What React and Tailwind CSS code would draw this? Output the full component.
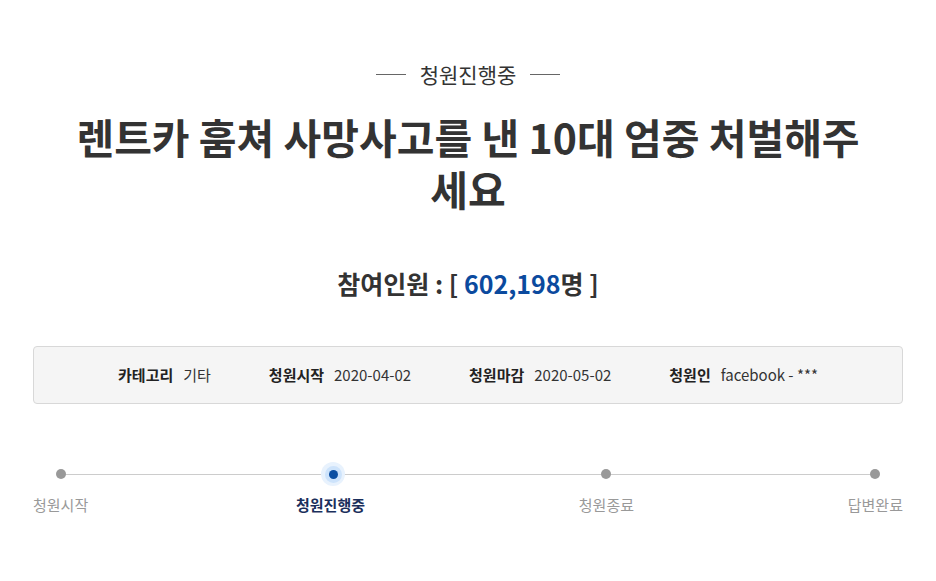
import React from "react"

const steps = [
  { label: "청원시작", active: false },
  { label: "청원진행중", active: true },
  { label: "청원종료", active: false },
  { label: "답변완료", active: false },
]

const info = [
  { label: "카테고리", value: "기타" },
  { label: "청원시작", value: "2020-04-02" },
  { label: "청원마감", value: "2020-05-02" },
  { label: "청원인", value: "facebook - ***" },
]

export default function App() {
  return (
    <div
      className="min-h-screen bg-white text-[#333] px-[33px]"
      style={{ fontFamily: '"Noto Sans CJK KR", "Noto Sans", sans-serif' }}
    >
      <div className="pt-[60px] flex items-center justify-center gap-[14px] text-[21px] leading-[28px] text-[#333]">
        <span className="w-[30px] h-px bg-[#666]" />
        <span>청원진행중</span>
        <span className="w-[30px] h-px bg-[#666]" />
      </div>

      <h1 className="mt-[22px] mx-auto max-w-[800px] text-center text-[41px] leading-[52px] font-bold text-[#333]">
        렌트카 훔쳐 사망사고를 낸 10대 엄중 처벌해주세요
      </h1>

      <p className="mt-[51px] text-center text-[25px] leading-[36px] font-bold text-[#333]">
        참여인원 : [ <span className="text-[#0b4a9e]">602,198</span>명 ]
      </p>

      <div className="mt-[45px] h-[58px] rounded-[4px] border border-[#d8d8d8] bg-[#f5f5f5] flex items-center justify-center gap-[58px] text-[15px]">
        {info.map((item) => (
          <div key={item.label} className="flex items-center gap-[10px]">
            <span className="font-bold text-[#222]">{item.label}</span>
            <span className="text-[#333]">{item.value}</span>
          </div>
        ))}
      </div>

      <div className="mt-[59px] flex justify-between">
        {steps.map((step) => (
          <div key={step.label} className="relative flex flex-col items-center">
            <div className="h-[22px] flex items-center justify-center">
              {step.active ? (
                <span className="relative z-10 w-[24px] h-[24px] rounded-full bg-[#e8f2fd] flex items-center justify-center">
                  <span className="w-[17px] h-[17px] rounded-full bg-[#cde3fb] flex items-center justify-center">
                    <span className="w-[9px] h-[9px] rounded-full bg-[#0b4ea2]" />
                  </span>
                </span>
              ) : (
                <span className="relative z-10 w-[10px] h-[10px] rounded-full bg-[#999]" />
              )}
            </div>
            <span
              className={
                step.active
                  ? "mt-[9px] -ml-[6px] text-[15px] leading-[22px] font-bold text-[#1b2f5c]"
                  : "mt-[9px] text-[15px] leading-[22px] text-[#999]"
              }
            >
              {step.label}
            </span>
          </div>
        ))}
      </div>
      <div className="relative -mt-[42px] mx-[28px] h-px bg-[#ccc]" />
    </div>
  )
}
